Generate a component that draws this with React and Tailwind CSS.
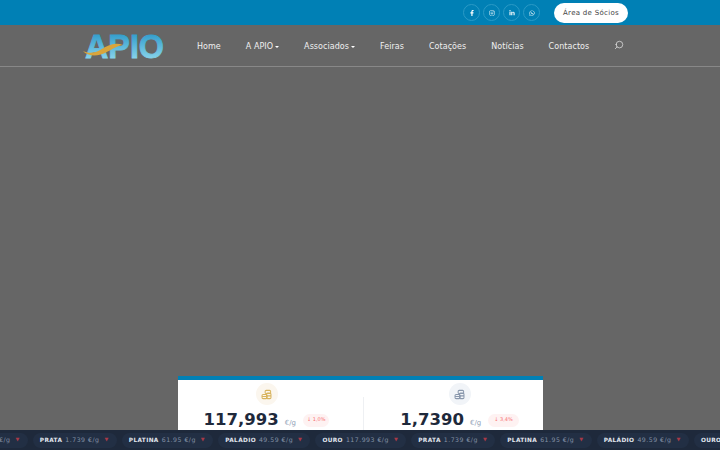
import React from "react";
import { FaFacebookF, FaInstagram, FaLinkedinIn, FaWhatsapp } from "react-icons/fa";
import { Search } from "lucide-react";

function Logo() {
  return (
    <svg width="82" height="26" viewBox="0 0 82 26" className="block">
      <defs>
        <linearGradient id="lg" x1="0" y1="0" x2="0" y2="1">
          <stop offset="0" stopColor="#1c8fc4" />
          <stop offset="1" stopColor="#9be0f2" />
        </linearGradient>
      </defs>
      <text x="2" y="24.5" fontFamily="Liberation Sans" fontWeight="700" fontSize="33" fill="url(#lg)" stroke="url(#lg)" strokeWidth="0.8" textLength="79" lengthAdjust="spacingAndGlyphs">APIO</text>
      <path d="M0 18 C6 21 12 20 18 16.5 C25 12 32 9 40 12 C33 13 28 17 22 20 C14 24 4 23 0 18Z" fill="#d9a53c" />
    </svg>
  );
}

function Social({ children }) {
  return (
    <span className="w-[17px] h-[17px] rounded-full border border-[#2b9ac6] flex items-center justify-center text-white text-[6px]">
      {children}
    </span>
  );
}

function NavItem({ label, caret }) {
  return (
    <span className="flex items-center text-[8px] tracking-[0.05px] text-[#f0f0f0] font-['DejaVu_Sans',sans-serif]">
      {label}
      {caret && <span className="ml-[2px] mb-[1px] w-0 h-0 border-x-[2.5px] border-x-transparent border-t-[2.5px] border-t-white" />}
    </span>
  );
}

function Coins({ color }) {
  return (
    <svg width="11" height="11" viewBox="0 0 16 16" fill="none" stroke={color} strokeWidth="1.5">
      <rect x="1.5" y="8" width="7.5" height="6" rx="1.5" />
      <rect x="8" y="6" width="6.5" height="8" rx="1.5" />
      <rect x="6" y="2" width="8" height="4.5" rx="1.5" />
      <path d="M1.5 11h7.5M8 10h6.5" />
    </svg>
  );
}

function Stat({ value, change, iconBg, iconColor, className, chipClass }) {
  return (
    <div className={`flex flex-col items-center pt-[3px] ${className}`}>
      <span className={`w-[22px] h-[22px] rounded-full flex items-center justify-center ${iconBg}`}>
        <Coins color={iconColor} />
      </span>
      <div className="flex items-center mt-[3px] font-['DejaVu_Sans',sans-serif]">
        <span className="text-[16.5px] leading-[24px] font-bold text-[#1e293b]">{value}</span>
        <span className="ml-[6px] mt-[6px] text-[7px] text-[#94a3b8]">€/g</span>
        <span className={`ml-[7px] h-[13px] rounded-full bg-[#fef2f2] text-[#f87171] text-[5px] flex items-center ${chipClass}`}>{change}</span>
      </div>
    </div>
  );
}

const ITEMS = [
  ["OURO", "117.993 €/g"],
  ["PRATA", "1.739 €/g"],
  ["PLATINA", "61.95 €/g"],
  ["PALÁDIO", "49.59 €/g"],
];

function Pill({ name, price }) {
  return (
    <span className="shrink-0 h-[15px] pl-[7px] pr-[8.5px] rounded-full bg-[#222f44] flex items-center font-['DejaVu_Sans',sans-serif]">
      <span className="font-bold text-[5.8px] tracking-[0.35px] text-[#e2e8f0]">{name}</span>
      <span className="ml-[3px] text-[6.2px] tracking-[0.5px] text-[#8492a6]">{price}</span>
      <span className="ml-[5px] text-[#a83a48] text-[5px]">▼</span>
    </span>
  );
}

export default function App() {
  const all = [...ITEMS, ...ITEMS, ...ITEMS];
  return (
    <div className="relative w-[720px] h-[450px] overflow-hidden bg-[#666666] flex flex-col">
      <div className="h-[25px] bg-[#0080b5] flex items-center justify-end pr-[92px] shrink-0">
        <div className="flex items-center gap-[3px] mr-[14px]">
          <Social><FaFacebookF /></Social>
          <Social><FaInstagram /></Social>
          <Social><FaLinkedinIn /></Social>
          <Social><FaWhatsapp /></Social>
        </div>
        <span className="w-[74px] h-[20px] pt-[1px] rounded-full bg-white flex items-center justify-center text-[7px] tracking-[0.3px] text-[#444] font-['DejaVu_Sans',sans-serif]">
          Área de Sócios
        </span>
      </div>
      <div className="h-[42px] shrink-0 border-b border-[#888888] flex items-center pl-[83px]">
        <Logo />
        <div className="flex items-center gap-[25px] ml-[32px] mt-[3px]">
          <NavItem label="Home" />
          <NavItem label="A APIO" caret />
          <NavItem label="Associados" caret />
          <NavItem label="Feiras" />
          <NavItem label="Cotações" />
          <NavItem label="Notícias" />
          <NavItem label="Contactos" />
          <Search size={10} color="#f0f0f0" strokeWidth={1.6} className="-scale-x-100 -mt-[5px]" />
        </div>
      </div>
      <div className="flex-1 flex justify-center pt-[309px]">
        <div className="w-[365px] h-[80px] shrink-0 bg-white border-t-4 border-[#0080b5] flex">
          <Stat value="117,993" change="↓ 1,0%" iconBg="bg-[#fbf6ee]" iconColor="#d8b45f" className="w-[185px] pr-[7px]" chipClass="px-[4px]" />
          <div className="w-px h-[36px] bg-[#eef0f3] mt-[17px]" />
          <Stat value="1,7390" change="↓ 3,4%" iconBg="bg-[#f1f4f8]" iconColor="#8a98ad" className="flex-1 pl-[13px]" chipClass="px-[6px]" />
        </div>
      </div>
      <div className="absolute left-0 bottom-0 w-full h-[20px] bg-[#1e293b] flex items-center overflow-hidden">
        <div className="flex items-center gap-[5px] -ml-[63px] shrink-0">
          {all.map(([n, p], i) => <Pill key={i} name={n} price={p} />)}
        </div>
      </div>
    </div>
  );
}
